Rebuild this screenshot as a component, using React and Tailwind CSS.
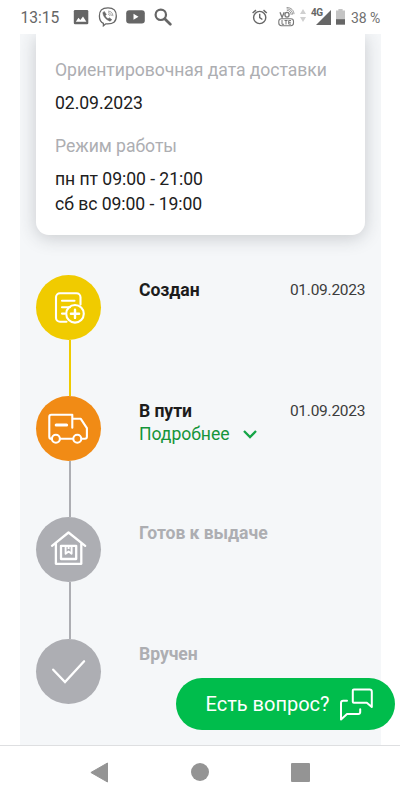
import React from 'react';

function StatusBar() {
  return (
    <header className="flex h-[34px] shrink-0 items-start bg-white pt-[7px] text-[#666]">
      <span className="ml-[20.5px] mr-[-0.5px] mt-px w-[40px] whitespace-nowrap text-[15.6px] leading-5">13:15</span>
      <svg className="ml-[13px] mt-[2px] h-4 w-4" viewBox="0 0 16 16">
        <rect x=".8" y="1" width="14.5" height="14.3" rx="1.3" fill="#666" />
        <path d="M2.8 12.7 5.5 8.8 7.3 11 10 7.5 13.4 12.7Z" fill="#fff" />
      </svg>
      <svg className="ml-[9px] h-5 w-5" viewBox="0 0 20 20" fill="none" stroke="#666">
        <path d="M10 .8C3.8.8 1.4 3.5 1.4 9c0 4 1.2 6.2 4 7.3v2.5l2.4-2c7.8.6 10.5-2.3 10.5-7.8S15.8.8 10 .8Z" strokeWidth="1.3" />
        <path d="M6.2 4.4 4.9 5.7c.3 3.7 3.2 7 7.1 8.5l1.8-1.5-2.3-1.8-1.4.8c-1.5-.6-2.4-1.7-2.8-3.2l1-1.1Z" fill="#666" strokeWidth=".6" />
        <path d="M10 4.1c3 .1 4.8 1.8 4.9 5M10 5.7c2 .2 3.2 1.3 3.3 3.2M10.2 7.3c1 .1 1.5.6 1.6 1.5" strokeWidth=".6" />
      </svg>
      <svg className="ml-2 mt-[3px] h-[14px] w-[19px]" viewBox="0 0 19 14">
        <rect x=".2" y=".2" width="18.6" height="13.3" rx="3" fill="#666" />
        <path d="m7.5 3.8 5 3-5 3Z" fill="#fff" />
      </svg>
      <svg className="ml-[9px] mt-px h-[18px] w-[18px]" viewBox="0 0 18 18" fill="none" stroke="#666">
        <circle cx="6.8" cy="6.8" r="5.2" strokeWidth="2.2" />
        <path d="m10.7 10.7 5.6 5.6" strokeWidth="2.7" strokeLinecap="round" />
      </svg>
      <svg className="ml-[79.5px] mt-[2px] h-4 w-4" viewBox="0 0 16 16" fill="none" stroke="#666" strokeWidth="1.4">
        <circle cx="7.7" cy="8.5" r="6.1" />
        <path d="M7.7 4.8v3.8l2.7 1.9M.6 4 4 1.1M11.5 1.1l3.3 2.9" />
      </svg>
      <svg className="ml-[10px] h-5 w-[18px]" viewBox="0 0 18 20" fill="none" stroke="#777">
        <path d="m2 5.2 2.1 5.2 2.1-5.2" strokeWidth="1.3" />
        <ellipse cx="9" cy="7.8" rx="2.1" ry="2.4" strokeWidth="1.3" />
        <path d="M8.8 3.3c2.7 0 4.3 2 4.4 4.6M8.7 1.8c3.9 0 5.8 2.7 5.9 5.8M8.6.5c4.8 0 7.2 3 7.4 6.6" strokeWidth=".75" />
        <rect x=".8" y="11.7" width="14.7" height="7" rx="2.6" strokeWidth="1.1" />
        <path d="M4 13v4.3h2.1M6.5 13.5h3M8 13.5v4M13 13.5h-2.3v3.6H13m-2.2-1.8h2" strokeWidth="1" />
      </svg>
      <svg className="ml-[4.5px] mt-[2px] h-[14px] w-[6px]" viewBox="0 0 6 14" fill="#d0d0d0">
        <path d="M3 0 6 5H0ZM3 13 0 8h6Z" />
      </svg>
      <div className="relative ml-[4px] h-5 w-[22px]">
        <span className="absolute left-[1px] top-0 text-[10px] font-bold leading-[11px] tracking-[-0.5px]">4G</span>
        <svg className="absolute left-[6px] top-[3px] h-[15px] w-[15px]" viewBox="0 0 15 15"><path d="M15 0v15H0Z" fill="#666" /></svg>
      </div>
      <svg className="ml-[4px] mt-[2px] h-4 w-[9px]" viewBox="0 0 9 16">
        <path d="M2.4 0h4.2v1.5H9V16H0V1.5h2.4Z" fill="#c4c4c4" />
        <path d="M0 10.2h9V15.5H0Z" fill="#666" />
      </svg>
      <span className="ml-[6px] mt-px whitespace-nowrap text-[14px] leading-5 tracking-[-0.1px] text-[#707070]">38 %</span>
    </header>
  );
}

function DeliveryCard() {
  return (
    <section className="mx-4 h-[201px] shrink-0 rounded-b-[13px] bg-white pl-[19px] pt-[24px] text-[17.6px] leading-[25px] tracking-[-0.05px] text-[#202020] shadow-[0_3px_18px_rgba(40,45,55,0.22)]">
      <p className="whitespace-nowrap text-[#adaeb2]">Ориентировочная дата доставки</p>
      <p className="mt-[8px]">02.09.2023</p>
      <p className="mt-[18px] text-[#adaeb2]">Режим работы</p>
      <p className="mt-[8px]">пн пт 09:00 - 21:00</p>
      <p>сб вс 09:00 - 19:00</p>
    </section>
  );
}

function CreatedIcon() {
  return (
    <svg viewBox="0 0 65 65" className="h-[65px] w-[65px]" fill="none" stroke="#fff" strokeWidth="2.1" strokeLinecap="round">
      <path d="M30.5 46.8H24a4 4 0 0 1-4-4V22.3a4 4 0 0 1 4-4h16.5a4 4 0 0 1 4 4v7.3" />
      <path d="M26 25.7h12.5M26 32.3h8M26 38.6h3" />
      <circle cx="39" cy="38.8" r="8.8" />
      <path d="M34.9 38.8h8.2M39 34.7v8.2" strokeWidth="2.4" />
    </svg>
  );
}

function TruckIcon() {
  return (
    <svg viewBox="0 0 65 65" className="h-[65px] w-[65px]" fill="none" stroke="#fff" strokeWidth="2.1" strokeLinecap="round" strokeLinejoin="round">
      <path d="M36.3 31.8V18.8H15.3a2 2 0 0 0-2 2v19.9a2.2 2.2 0 0 0 2.2 2.2M24 42.8h13M36.5 22.8h8.3l6.1 9.3v8.6a2 2 0 0 1-2 2h-3.4" />
      <circle cx="19.9" cy="42.8" r="4" />
      <circle cx="41.3" cy="42.8" r="4" />
      <path d="M20.2 28.9h10.4" strokeWidth="3" />
    </svg>
  );
}

function PickupIcon() {
  return (
    <svg viewBox="0 0 65 65" className="h-[65px] w-[65px]" fill="none" stroke="#fff" strokeWidth="2.3" strokeLinejoin="round">
      <path d="m16 28.8 16.5-13.3 16.7 13.3M19.9 26.5v20.3h25.4V26.5" strokeLinecap="round" />
      <path d="M25 28.8h15.2v13.2H25Z" />
      <path d="M29.6 29.5v7.2l3-2.3 3 2.3v-7.2M32.6 30v2" strokeWidth="1.9" />
    </svg>
  );
}

function CheckIcon() {
  return (
    <svg viewBox="0 0 65 65" className="h-[65px] w-[65px]" fill="none" stroke="#fff" strokeWidth="2.3" strokeLinecap="round" strokeLinejoin="miter">
      <path d="m17.2 30.7 11.8 12.4 19.1-20.8" />
    </svg>
  );
}

function Step({ title, date, color, line, icon, details, muted }) {
  return (
    <li className={`flex shrink-0 ${line ? 'h-[121.2px]' : 'h-[65px]'}`}>
      <div className="flex w-[65px] shrink-0 flex-col items-center">
        <div className={`h-[65px] w-[65px] shrink-0 rounded-full ${color}`}>{icon}</div>
        {line && <div className={`ml-[3px] w-[2px] flex-1 ${line}`} />}
      </div>
      <div className={`ml-[38px] flex-1 ${muted ? 'pt-[3.2px]' : 'pt-[2.5px]'}`}>
        <div className="flex items-start justify-between">
          <h2 className={`text-[17.6px] font-bold leading-6 tracking-[-0.07px] ${muted ? 'text-[#adaeb2]' : 'text-[#1c1c1c]'}`}>{title}</h2>
          {date && <time className="mr-[-0.25px] text-[15.5px] leading-6 tracking-[-0.25px] text-[#3c3c3c]">{date}</time>}
        </div>
        {details && (
          <button className="flex h-[22px] items-center text-[17.6px] leading-[22px] tracking-[-0.05px] text-[#15953a]">
            Подробнее
            <svg className="ml-[14px] h-[10px] w-[14px]" viewBox="0 0 14 10" fill="none" stroke="#15a547" strokeWidth="2.3"><path d="m1 2 6 6 6-6" /></svg>
          </button>
        )}
      </div>
    </li>
  );
}

function NavigationBar() {
  return (
    <nav className="flex h-[55px] shrink-0 items-center justify-center border-t border-[#dedfe1] bg-white pb-[2px]">
      <svg className="h-[21px] w-[19px]" viewBox="0 0 19 21"><path d="M17.5 1v19L.9 10.5Z" fill="#949494" stroke="#949494" strokeLinejoin="round" /></svg>
      <div className="ml-[82px] h-[18px] w-[18px] rounded-full bg-[#949494]" />
      <div className="ml-[82px] h-[19px] w-[19px] rounded-[1px] bg-[#949494]" />
    </nav>
  );
}

export default function App() {
  return (
    <div className="relative flex h-[800px] w-[400px] flex-col overflow-hidden bg-white font-[Roboto,sans-serif]">
      <StatusBar />
      <main className="ml-5 flex h-[711px] w-[361px] shrink-0 flex-col overflow-hidden bg-[#f5f7f9]">
        <DeliveryCard />
        <ol className="mx-4 mt-[40px] flex flex-col">
          <Step title="Создан" date="01.09.2023" color="bg-[#f0cb00]" line="bg-[#efcb00]" icon={<CreatedIcon />} />
          <Step title="В пути" date="01.09.2023" color="bg-[#f18b15]" line="bg-[#adaeb3]" icon={<TruckIcon />} details />
          <Step title="Готов к выдаче" color="bg-[#adaeb3]" line="bg-[#adaeb3]" icon={<PickupIcon />} muted />
          <Step title="Вручен" color="bg-[#adaeb3]" icon={<CheckIcon />} muted />
        </ol>
      </main>
      <NavigationBar />
      <button className="absolute left-[176px] top-[678px] flex h-[52px] w-[219px] items-center rounded-full bg-[#00bd4c] pl-[29.5px] text-left text-[20px] text-white">
        <span className="w-[125px] whitespace-nowrap">Есть вопрос?</span>
        <svg className="ml-[8.5px] h-[34px] w-[35px]" viewBox="0 0 35 34" fill="none" stroke="#fff" strokeWidth="2" strokeLinejoin="round" strokeLinecap="round">
          <path d="M14.8 2.5h15.8a2.2 2.2 0 0 1 2.2 2.2v15.3l-5-4.3H14.8a1 1 0 0 1-1-1V3.5a1 1 0 0 1 1-1Z" />
          <path d="M8 13.8H4.2a2.2 2.2 0 0 0-2.2 2.2v16.5l6-5.5h11.4a1.8 1.8 0 0 0 1.8-1.8v-2.9" />
        </svg>
      </button>
    </div>
  );
}
